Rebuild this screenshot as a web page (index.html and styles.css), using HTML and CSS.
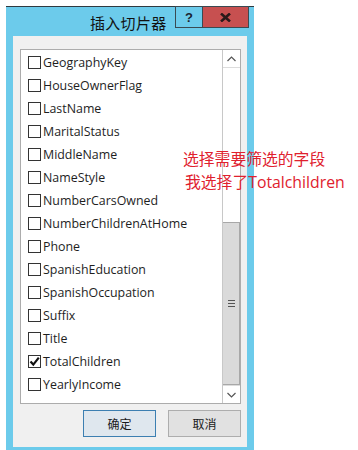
FILE: index.html
```html
<!DOCTYPE html>
<html>
<head>
<meta charset="utf-8">
<link rel="stylesheet" href="styles.css">
</head>
<body>
<div class="page">
  <div class="window">
    <div class="titlebar">
      <div class="title">插入切片器</div>
      <div class="ctrls">
        <div class="btn-help">?</div>
        <div class="btn-close">
          <svg width="11" height="9" viewBox="0 0 11 9"><path d="M1 0.5 L10 8.5 M10 0.5 L1 8.5" stroke="#2a1a1a" stroke-width="2.6"/></svg>
        </div>
      </div>
    </div>
    <div class="client">
      <div class="listbox">
        <div class="items">
          <div class="item"><span class="cb"></span><span class="lbl">GeographyKey</span></div>
          <div class="item"><span class="cb"></span><span class="lbl">HouseOwnerFlag</span></div>
          <div class="item"><span class="cb"></span><span class="lbl">LastName</span></div>
          <div class="item"><span class="cb"></span><span class="lbl">MaritalStatus</span></div>
          <div class="item"><span class="cb"></span><span class="lbl">MiddleName</span></div>
          <div class="item"><span class="cb"></span><span class="lbl">NameStyle</span></div>
          <div class="item"><span class="cb"></span><span class="lbl">NumberCarsOwned</span></div>
          <div class="item"><span class="cb"></span><span class="lbl">NumberChildrenAtHome</span></div>
          <div class="item"><span class="cb"></span><span class="lbl">Phone</span></div>
          <div class="item"><span class="cb"></span><span class="lbl">SpanishEducation</span></div>
          <div class="item"><span class="cb"></span><span class="lbl">SpanishOccupation</span></div>
          <div class="item"><span class="cb"></span><span class="lbl">Suffix</span></div>
          <div class="item"><span class="cb"></span><span class="lbl">Title</span></div>
          <div class="item"><span class="cb checked"><svg width="11" height="11" viewBox="0 0 11 11"><path d="M1.5 5.5 L4.3 8.6 L9.8 1.6" fill="none" stroke="#111" stroke-width="2.2"/></svg></span><span class="lbl">TotalChildren</span></div>
          <div class="item"><span class="cb"></span><span class="lbl">YearlyIncome</span></div>
        </div>
        <div class="scrollbar">
          <div class="arrow up"><svg width="9" height="6" viewBox="0 0 9 6"><path d="M0.5 5 L4.5 1 L8.5 5" fill="none" stroke="#555" stroke-width="1.2"/></svg></div>
          <div class="track"></div>
          <div class="thumb"><span class="grip"></span></div>
          <div class="arrow down"><svg width="9" height="6" viewBox="0 0 9 6"><path d="M0.5 1 L4.5 5 L8.5 1" fill="none" stroke="#555" stroke-width="1.2"/></svg></div>
        </div>
      </div>
      <div class="buttons">
        <div class="button default">确定</div>
        <div class="button">取消</div>
      </div>
    </div>
  </div>
  <div class="note">
    <div>选择需要筛选的字段</div>
    <div class="note-2">我选择了Totalchildren</div>
  </div>
</div>
</body>
</html>
```

FILE: styles.css
```css
html, body {
  margin: 0;
  padding: 0;
  background: #ffffff;
}
.page {
  display: flex;
  align-items: flex-start;
  padding: 6px 0 0 6px;
  height: 444px;
  overflow: hidden;
  font-family: "Open Sans", "Noto Sans CJK SC", sans-serif;
}
.window {
  width: 248px;
  height: 450px;
  background: #6ccbeb;
  border-top: 1px solid #2f3a40;
  box-sizing: border-box;
  display: flex;
  flex-direction: column;
  flex-shrink: 0;
}
.titlebar {
  height: 29px;
  display: flex;
  position: relative;
}
.title {
  position: absolute;
  left: 84px;
  top: 5px;
  font-family: "Noto Sans CJK SC", sans-serif;
  font-size: 15px;
  color: #111;
  letter-spacing: 0.3px;
}
.ctrls {
  margin-left: auto;
  margin-right: 5px;
  margin-top: -1px;
  display: flex;
  height: 22px;
}
.btn-help {
  width: 27px;
  height: 22px;
  box-sizing: border-box;
  border: 1px solid #3a4a52;
  border-right: none;
  background: #6ccbeb;
  display: flex;
  align-items: center;
  justify-content: center;
  font-family: "Liberation Sans", sans-serif;
  font-weight: bold;
  font-size: 13px;
  color: #1a2530;
}
.btn-close {
  width: 47px;
  height: 22px;
  box-sizing: border-box;
  border: 1px solid #3a4a52;
  background: #c75050;
  display: flex;
  align-items: center;
  justify-content: center;
}
.client {
  margin: 0 7px 0 7px;
  background: #f0f0f0;
  height: 411px;
  padding: 13px 6px 0 7px;
  box-sizing: border-box;
}
.listbox {
  height: 355px;
  border: 1px solid #acacac;
  background: #ffffff;
  box-sizing: border-box;
  display: flex;
}
.items {
  flex: 1;
  padding-top: 1px;
  padding-left: 7px;
}
.item {
  height: 23px;
  display: flex;
  align-items: center;
  font-size: 12.4px;
  color: #1e1e1e;
}
.cb {
  width: 13px;
  height: 13px;
  box-sizing: border-box;
  border: 1px solid #333;
  background: #fff;
  margin-right: 2px;
  display: flex;
  align-items: center;
  justify-content: center;
}
.scrollbar {
  width: 17px;
  display: flex;
  flex-direction: column;
  border-left: 1px solid #c8c8c8;
  background: #fafafa;
}
.arrow {
  height: 17px;
  display: flex;
  align-items: center;
  justify-content: center;
  background: #ffffff;
  border-bottom: 1px solid #dcdcdc;
}
.arrow.down {
  border-bottom: none;
  border-top: 1px solid #dcdcdc;
}
.track {
  height: 154px;
  background: #ffffff;
}
.thumb {
  flex: 1;
  background: #dadada;
  border-top: 1px solid #a8a8a8;
  border-bottom: 1px solid #a8a8a8;
  border-right: 1px solid #a8a8a8;
  display: flex;
  align-items: center;
  justify-content: center;
}
.grip {
  width: 7px;
  height: 7px;
  border-top: 1px solid #555;
  border-bottom: 1px solid #555;
  box-sizing: border-box;
  position: relative;
}
.grip::after {
  content: "";
  position: absolute;
  left: 0;
  right: 0;
  top: 2px;
  height: 1px;
  background: #555;
}
.buttons {
  display: flex;
  justify-content: flex-end;
  gap: 12px;
  margin-top: 6px;
}
.button {
  width: 73px;
  height: 27px;
  box-sizing: border-box;
  border: 1px solid #adadad;
  background: #e1e1e1;
  display: flex;
  align-items: center;
  justify-content: center;
  font-family: "Noto Sans CJK SC", sans-serif;
  font-size: 12px;
  color: #1a1a1a;
}
.button.default {
  border: 1px solid #3c7fb1;
  background: #dfe7ee;
}
.note {
  margin-left: -71px;
  margin-top: 142px;
  color: #e0212e;
  font-family: "Open Sans", "Noto Sans CJK SC", sans-serif;
  font-size: 15.8px;
  line-height: 23px;
}
.note-2 {
  padding-left: 2px;
}
```
